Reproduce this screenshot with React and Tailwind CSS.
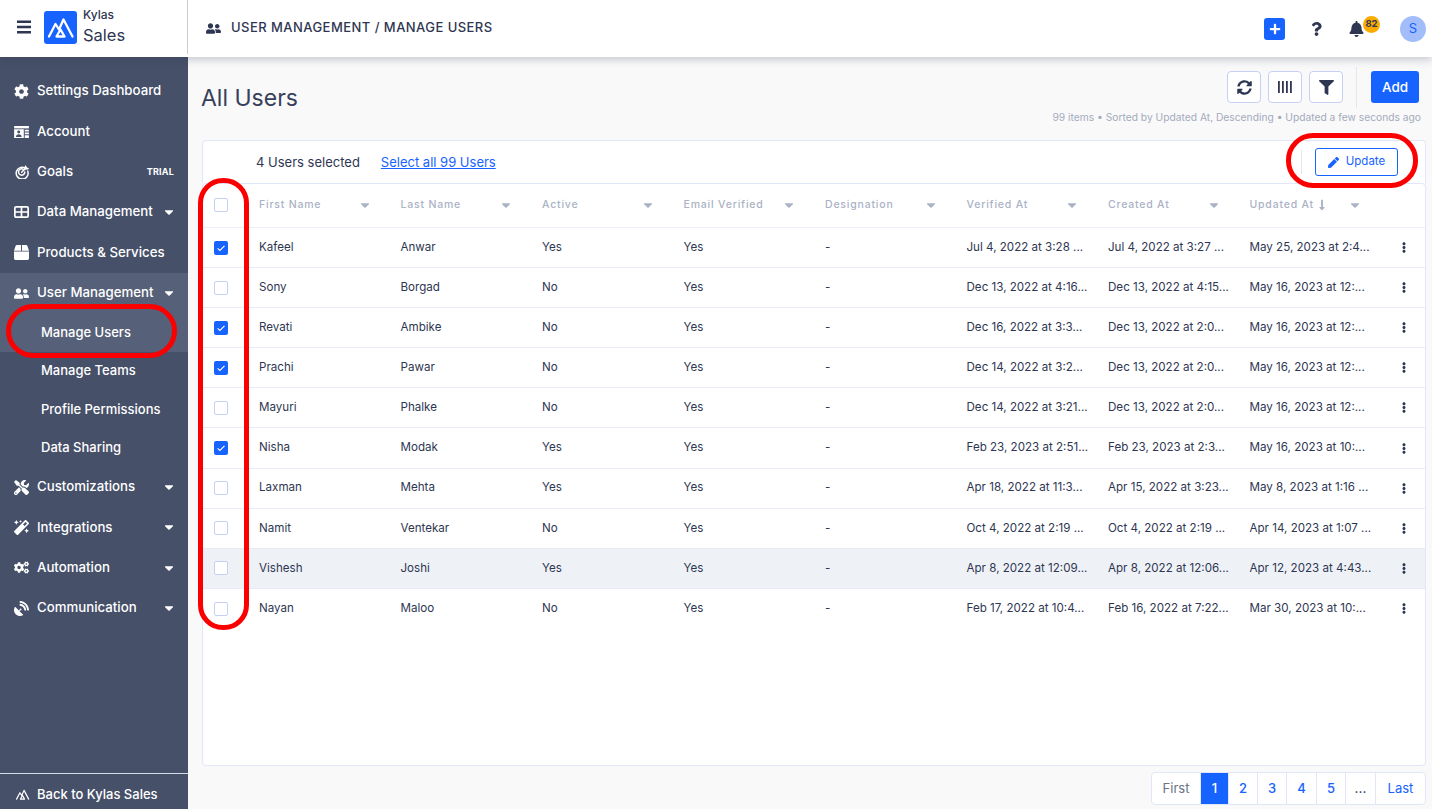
import React from "react";
import { FaUserFriends, FaPlus, FaQuestion, FaBell, FaSyncAlt, FaFilter, FaPen, FaEllipsisV, FaCaretDown, FaCog, FaBox, FaTools, FaMagic, FaCogs, FaSatelliteDish, FaLongArrowAltDown } from "react-icons/fa";

const Logo = ({ className }) => (
  <svg viewBox="0 0 33 33" className={className} fill="none" stroke="currentColor" strokeWidth="2.3" strokeLinecap="round" strokeLinejoin="round">
    <path d="M5 25.5 L11.5 13 L15 18.5 L19.5 8.5 L28.5 25.5" />
    <path d="M12.5 25.5 L16.5 18.5 L20.5 25.5 Z" />
  </svg>
);
const AccountIcon = () => (
  <svg viewBox="0 0 16 13" className="w-[15px] h-[12px]" fill="currentColor">
    <path d="M0 0h16v2.6H0z" /><path fillRule="evenodd" d="M0 3.6h10.5V13H0zM5 5a1.6 1.6 0 100 3.2A1.6 1.6 0 005 5zM2 11.8h6.2c0-1.8-1.2-2.8-3.1-2.8S2 10 2 11.8z" />
    <path d="M11.5 4H16v2h-4.5zM11.5 7H16v2h-4.5zM11.5 10H16v3h-4.5z" />
  </svg>
);
const GoalIcon = () => (
  <svg viewBox="0 0 16 16" className="w-[14px] h-[14px]" fill="none" stroke="currentColor" strokeWidth="1.7" strokeLinecap="round">
    <path d="M12.6 4.1A6.8 6.8 0 1014.6 7" /><path d="M9.6 5A3.6 3.6 0 1011.2 8" /><path d="M7.6 8.2L13 3" /><path d="M12 1.6v2.6h2.8" strokeWidth="1.9" />
  </svg>
);
const GridIcon = () => (
  <svg viewBox="0 0 15 12" className="w-[15px] h-[12px]" fill="none" stroke="currentColor" strokeWidth="1.7">
    <rect x=".85" y=".85" width="13.3" height="10.3" rx="1.2" /><path d="M7.5 1v10M1 6h13" />
  </svg>
);

const Nav = ({ icon, label, caret, badge }) => (
  <div className="flex items-center h-[40.4px] pl-[14px] pr-[12px] text-white text-[13.25px] font-medium">
    <span className="w-[15px] flex justify-center shrink-0 text-white text-[15px]">{icon}</span>
    <span className="ml-[8px] flex-1 whitespace-nowrap">{label}</span>
    {caret && <FaCaretDown className="w-[14px] h-[14px] text-white" />}
    {badge && <span className="text-[9px] font-bold tracking-[0.2px] mr-[2px]">{badge}</span>}
  </div>
);
const Sub = ({ label }) => (
  <div className="flex items-center h-[38.4px] pl-[41px] text-white text-[13px] font-medium whitespace-nowrap">{label}</div>
);

const Check = ({ on }) => on ? (
  <span className="w-[14px] h-[14px] rounded-[2px] bg-[#1763ff] flex items-center justify-center">
    <svg viewBox="0 0 14 14" className="w-[14px] h-[14px]" fill="none" stroke="#fff" strokeWidth="1.1"><path d="M3.6 7.3l2.3 2.2 4.6-4.7" /></svg>
  </span>
) : (
  <span className="w-[14px] h-[14px] rounded-[2px] border border-[#c6d0f5] bg-white block" />
);

const cols = "grid grid-cols-[56px_repeat(8,141.5px)_1fr] items-center";
const heads = ["First Name", "Last Name", "Active", "Email Verified", "Designation", "Verified At", "Created At", "Updated At"];
const rows = [
  [1, "Kafeel", "Anwar", "Yes", "Jul 4, 2022 at 3:28 ...", "Jul 4, 2022 at 3:27 ...", "May 25, 2023 at 2:4..."],
  [0, "Sony", "Borgad", "No", "Dec 13, 2022 at 4:16...", "Dec 13, 2022 at 4:15...", "May 16, 2023 at 12:..."],
  [1, "Revati", "Ambike", "No", "Dec 16, 2022 at 3:3...", "Dec 13, 2022 at 2:0...", "May 16, 2023 at 12:..."],
  [1, "Prachi", "Pawar", "No", "Dec 14, 2022 at 3:2...", "Dec 13, 2022 at 2:0...", "May 16, 2023 at 12:..."],
  [0, "Mayuri", "Phalke", "No", "Dec 14, 2022 at 3:21...", "Dec 13, 2022 at 2:0...", "May 16, 2023 at 12:..."],
  [1, "Nisha", "Modak", "Yes", "Feb 23, 2023 at 2:51...", "Feb 23, 2023 at 2:3...", "May 16, 2023 at 10:..."],
  [0, "Laxman", "Mehta", "Yes", "Apr 18, 2022 at 11:3...", "Apr 15, 2022 at 3:23...", "May 8, 2023 at 1:16 ..."],
  [0, "Namit", "Ventekar", "No", "Oct 4, 2022 at 2:19 ...", "Oct 4, 2022 at 2:19 ...", "Apr 14, 2023 at 1:07 ..."],
  [0, "Vishesh", "Joshi", "Yes", "Apr 8, 2022 at 12:09...", "Apr 8, 2022 at 12:06...", "Apr 12, 2023 at 4:43..."],
  [0, "Nayan", "Maloo", "No", "Feb 17, 2022 at 10:4...", "Feb 16, 2022 at 7:22...", "Mar 30, 2023 at 10:..."],
];

const IconBtn = ({ children }) => (
  <button className="w-[34px] h-[32px] rounded-[4px] border border-[#c6d0f5] bg-white flex items-center justify-center text-[#2e3652]">{children}</button>
);
const Page = ({ children, cls, w }) => (
  <div className={`h-full flex items-center justify-center border-r border-[#e2e7f8] ${cls}`} style={{ width: w }}>{children}</div>
);

export default function App() {
  return (
    <div className="relative h-screen overflow-hidden flex flex-col bg-[#f9f9fa] text-[#2e3652] font-['Inter','Liberation_Sans',sans-serif]">
      <header className="relative z-10 h-[57px] shrink-0 bg-white flex items-center shadow-[0_2px_9px_rgba(40,50,80,0.28)]">
        <div className="w-[188px] h-[54px] self-start border-r border-[#c8cdd8] flex items-center pl-[17px]">
          <svg viewBox="0 0 14 14" className="w-[14px] h-[14px] text-[#2e3652]" fill="currentColor"><path d="M0 .5h14v2.6H0zM0 5.7h14v2.6H0zM0 10.9h14v2.6H0z" /></svg>
          <div className="ml-[13px] w-[33px] h-[33px] rounded-[3px] bg-[#1763ff] text-white"><Logo className="w-full h-full" /></div>
          <div className="ml-[6px] flex flex-col">
            <span className="text-[12px] leading-[14px] font-medium">Kylas</span>
            <span className="text-[16.5px] leading-[22px] mt-[2px]">Sales</span>
          </div>
        </div>
        <div className="flex-1 flex items-center pl-[18px] pb-[1px]">
          <FaUserFriends className="w-[15px] h-[15px] text-[#2e3652]" />
          <span className="ml-[10px] text-[13px] font-medium tracking-[0.45px] uppercase whitespace-nowrap">User Management / Manage Users</span>
        </div>
        <div className="flex items-center pr-[6px]">
          <div className="w-[21px] h-[22px] rounded-[3px] bg-[#1763ff] flex items-center justify-center text-white"><FaPlus className="w-[12px] h-[12px]" /></div>
          <FaQuestion className="ml-[26px] w-[11px] h-[14px] text-[#2e3652]" />
          <div className="relative ml-[27px] w-[15px] h-[16px]">
            <FaBell className="w-[15px] h-[16px] text-[#2e3652]" />
            <span className="absolute left-[14px] top-[-5px] w-[17px] h-[17px] rounded-full bg-[#fbab00] flex items-center justify-center text-[9.5px] font-bold">82</span>
          </div>
          <div className="ml-[36px] w-[26px] h-[26px] rounded-full bg-[#a3bdfb] flex items-center justify-center text-[#1763ff] text-[13px]">S</div>
        </div>
      </header>

      <div className="flex-1 flex min-h-0">
        <aside className="w-[188px] shrink-0 bg-[#465069] flex flex-col">
          <div className="flex-1 pt-[14px]">
            <Nav icon={<FaCog />} label="Settings Dashboard" />
            <Nav icon={<AccountIcon />} label="Account" />
            <Nav icon={<GoalIcon />} label="Goals" badge="TRIAL" />
            <Nav icon={<GridIcon />} label="Data Management" caret />
            <Nav icon={<FaBox className="w-[15px] h-[15px]" />} label="Products & Services" />
            <div className="bg-[#566078]">
              <Nav icon={<FaUserFriends />} label="User Management" caret />
              <Sub label="Manage Users" />
            </div>
            <Sub label="Manage Teams" />
            <Sub label="Profile Permissions" />
            <Sub label="Data Sharing" />
            <Nav icon={<FaTools />} label="Customizations" caret />
            <Nav icon={<FaMagic />} label="Integrations" caret />
            <Nav icon={<FaCogs />} label="Automation" caret />
            <Nav icon={<FaSatelliteDish />} label="Communication" caret />
          </div>
          <div className="h-[36px] border-t border-[#d5dbe8] flex items-center pl-[14px] pt-[6px] text-white text-[13px] font-medium">
            <Logo className="w-[17px] h-[17px]" />
            <span className="ml-[6px] whitespace-nowrap">Back to Kylas Sales</span>
          </div>
        </aside>

        <main className="flex-1 min-w-0 pl-[14px] pr-[6px] flex flex-col">
          <div className="h-[83px] shrink-0 flex justify-between pt-[10px]">
            <h1 className="text-[23px] leading-[30px] mt-[16px] -ml-px text-[#37405a] font-normal">All Users</h1>
            <div className="flex flex-col items-end pr-[5px]">
              <div className="flex items-center h-[41px] pr-[2px] -mt-[0.5px]">
                <IconBtn><FaSyncAlt className="w-[15px] h-[15px]" /></IconBtn>
                <div className="w-[7px]" />
                <IconBtn>
                  <svg viewBox="0 0 14 12" className="w-[14px] h-[12px]" fill="currentColor"><path d="M0 0h1.8v12H0zM4 0h1.8v12H4zM8 0h1.8v12H8zM12 0h1.8v12H12z" /></svg>
                </IconBtn>
                <div className="w-[7px]" />
                <IconBtn><FaFilter className="w-[15px] h-[15px]" /></IconBtn>
                <div className="ml-[13px] mr-[14px] w-px h-[41px] bg-[#e2e7f0]" />
                <button className="w-[48px] h-[32px] rounded-[3px] bg-[#1763ff] text-white text-[13.5px] font-medium">Add</button>
              </div>
              <div className="mt-[2.5px] text-[10.25px] leading-[14px] text-[#a3abbb] whitespace-nowrap">99 items • Sorted by Updated At, Descending • Updated a few seconds ago</div>
            </div>
          </div>

          <div className="h-[43px] shrink-0 bg-white border border-[#e2e7f8] border-b-0 rounded-t-[4px] flex items-center pl-[53px] pr-[27px]">
            <span className="text-[13px] pt-[1px]">4 Users selected</span>
            <a className="ml-[21px] pt-[1px] text-[13px] text-[#1763ff] underline">Select all 99 Users</a>
            <div className="ml-auto flex items-center">
              <div className="w-px h-[24px] bg-[#e2e7f0] mr-[13px]" />
              <button className="w-[83px] h-[28px] rounded-[3px] border border-[#1763ff] bg-white text-[#1763ff] text-[11.5px] flex items-center justify-center gap-[7px]">
                <FaPen className="w-[11px] h-[11px]" />Update
              </button>
            </div>
          </div>

          <div className="h-[583px] shrink-0 bg-white border border-[#e2e7f8] rounded-[4px]">
            <div className={`${cols} h-[44px] pb-[1px] border-b border-[#eef0f7]`}>
              <span className="pl-[11px]"><Check /></span>
              {heads.map((h) => (
                <div key={h} className="flex items-center pr-[29px] text-[10.5px] font-medium tracking-[0.8px] text-[#aab2c5] whitespace-nowrap">
                  <span>{h}</span>
                  {h === "Updated At" && <FaLongArrowAltDown className="ml-[3px] w-[10px] h-[12px]" />}
                  <FaCaretDown className="ml-auto w-[14px] h-[14px] text-[#aab2c5]" />
                </div>
              ))}
            </div>
            {rows.map((r, i) => (
              <div key={r[1]} className={`${cols} h-[40.1px] text-[11.6px] ${i < 9 ? "border-b border-[#e8eaf6]" : ""} ${i === 8 ? "bg-[#eef2f7]" : ""}`}>
                <span className="pl-[11px]"><Check on={!!r[0]} /></span>
                <span>{r[1]}</span>
                <span>{r[2]}</span>
                <span>{r[3]}</span>
                <span>Yes</span>
                <span>-</span>
                <span className="whitespace-nowrap">{r[4]}</span>
                <span className="whitespace-nowrap">{r[5]}</span>
                <span className="whitespace-nowrap">{r[6]}</span>
                <span className="flex justify-center pr-[8px]"><FaEllipsisV className="w-[10px] h-[11px]" /></span>
              </div>
            ))}
          </div>

          <div className="flex justify-end mt-[6px]">
            <div className="h-[33px] flex items-center bg-white border border-[#e2e7f8] rounded-[4px] overflow-hidden text-[13px] font-medium">
              <Page cls="text-[#6b7285] font-normal" w="49px">First</Page>
              <Page cls="bg-[#1763ff] text-white border-[#1763ff]" w="28px">1</Page>
              <Page cls="text-[#1763ff]" w="29px">2</Page>
              <Page cls="text-[#1763ff]" w="29px">3</Page>
              <Page cls="text-[#1763ff]" w="30px">4</Page>
              <Page cls="text-[#1763ff]" w="29px">5</Page>
              <Page cls="text-[#2e3652]" w="30px">...</Page>
              <div className="w-[49px] h-full flex items-center justify-center text-[#1763ff] font-normal">Last</div>
            </div>
          </div>
        </main>
      </div>

      <div className="absolute z-20 left-[6px] top-[304px] w-[171px] h-[54px] rounded-[27px] border-[5px] border-[#fb0000] pointer-events-none" />
      <div className="absolute z-20 left-[198px] top-[178px] w-[51px] h-[452px] rounded-[25px] border-[5px] border-[#fb0000] pointer-events-none" />
      <div className="absolute z-20 left-[1286px] top-[133px] w-[132px] h-[55px] rounded-[27px] border-[5px] border-[#fb0000] pointer-events-none" />
    </div>
  );
}
